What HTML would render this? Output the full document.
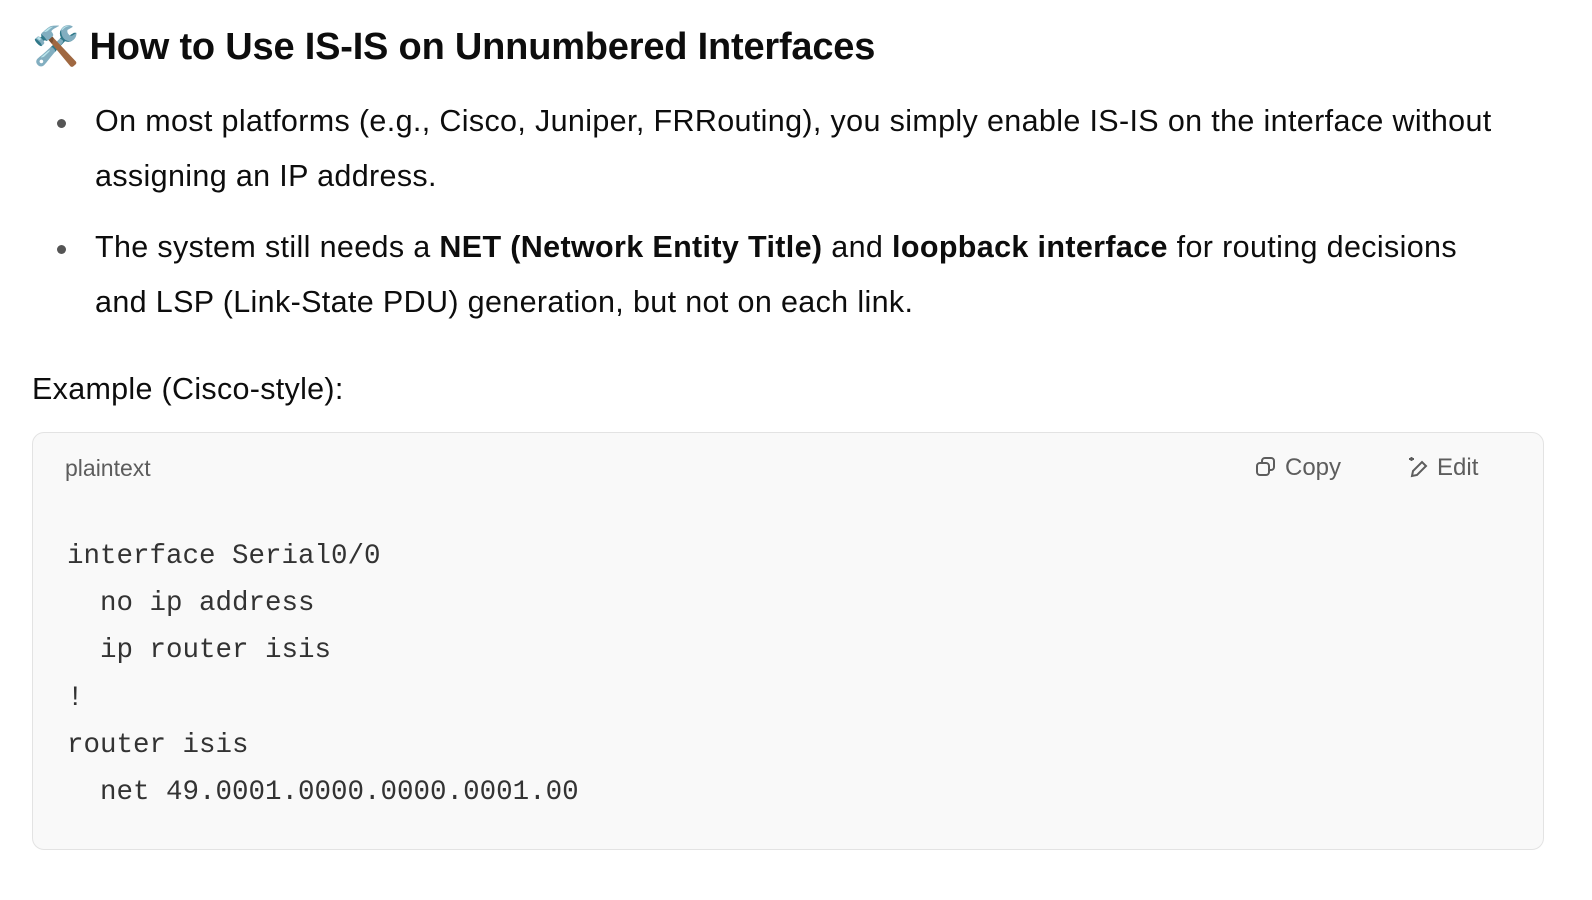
<!DOCTYPE html>
<html><head><meta charset="utf-8"><style>
body{margin:0;background:#fff;color:#0d0d0d;font-family:"Liberation Sans",sans-serif;width:1592px;height:900px;overflow:hidden}
h1{position:absolute;left:32px;top:22px;margin:0;font-size:38px;font-weight:bold;line-height:50px;letter-spacing:-0.2px}
ul{position:absolute;left:0;top:94px;margin:0;padding:0;list-style:none;width:1508px}
li{position:relative;padding-left:95px;font-size:30.5px;letter-spacing:0.35px;line-height:55px;margin-bottom:16px}
li:before{content:"";position:absolute;left:57px;top:25px;width:9px;height:9px;border-radius:50%;background:#555}
p{position:absolute;left:32px;top:362px;margin:0;font-size:30.5px;letter-spacing:0.3px;line-height:55px}
.code{position:absolute;left:32px;top:432px;width:1510px;height:416px;background:#f9f9f9;border:1px solid #e3e3e3;border-radius:12px}
.lang{position:absolute;left:32px;top:22px;font-size:23px;color:#5d5d5d}
.btn{position:absolute;top:21px;font-size:24px;color:#5d5d5d}
pre{position:absolute;left:34px;top:100px;margin:0;font-family:"Liberation Mono",monospace;font-size:27.5px;line-height:47.2px;color:#333}
</style></head><body>
<h1>🛠️ How to Use IS-IS on Unnumbered Interfaces</h1>
<ul>
<li>On most platforms (e.g., Cisco, Juniper, FRRouting), you simply enable IS-IS on the interface without assigning an IP address.</li>
<li>The system still needs a <b>NET (Network Entity Title)</b> and <b>loopback interface</b> for routing decisions and LSP (Link-State PDU) generation, but not on each link.</li>
</ul>
<p>Example (Cisco-style):</p>
<div class="code">
<div class="lang">plaintext</div>
<div class="btn" style="left:1222px"><svg width="22" height="22" viewBox="0 0 22 22" style="vertical-align:-3px;margin-right:8px" fill="none" stroke="#5d5d5d" stroke-width="2"><rect x="2" y="7" width="12" height="12" rx="3"/><path d="M7 7V5a3 3 0 0 1 3-3h6a3 3 0 0 1 3 3v6a3 3 0 0 1-3 3h-2"/></svg>Copy</div>
<div class="btn" style="left:1374px"><svg width="22" height="22" viewBox="0 0 22 22" style="vertical-align:-3px;margin-right:8px" fill="none" stroke="#5d5d5d" stroke-width="2"><path d="M5 20l1-5 9-9 4 4-9 9z"/><path d="M2 3h5M4.5 1v4"/></svg>Edit</div>
<pre>interface Serial0/0
  no ip address
  ip router isis
!
router isis
  net 49.0001.0000.0000.0001.00</pre>
</div>
</body></html>
